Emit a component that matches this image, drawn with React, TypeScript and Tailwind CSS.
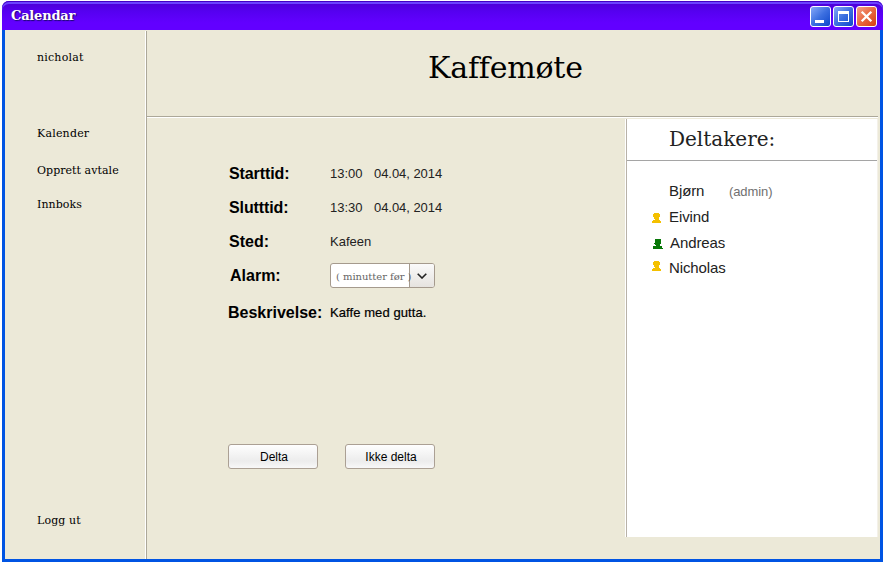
import React from "react";

const serif = "font-['DejaVu_Serif',serif]";
const sans = "font-['Liberation_Sans',Arial,sans-serif]";

function TitleBar() {
  const blue =
    "h-[21px] w-[21px] rounded-[3px] border border-white bg-linear-to-br from-[#86a8f8] via-[#3c6fe0] to-[#0b45cb]";
  return (
    <header className="flex h-[29px] shrink-0 items-start rounded-t-[7px] bg-linear-to-b from-[#4a00d0] from-0% via-[#5500f0] via-35% to-[#6200ff] to-75% shadow-[inset_0_1px_0_#4300c4,inset_0_3px_0_#6b42ff]">
      <h1 className={`${serif} grow pl-[9px] pt-[6px] text-[13px] font-bold leading-[18px] tracking-[-0.2px] text-white [text-shadow:1px_1px_1px_#1c0a70]`}>
        Calendar
      </h1>
      <div className="flex gap-[2px] pr-[6px] pt-[5px]">
        <button className={blue} aria-label="Minimize">
          <svg width="19" height="19" viewBox="0 0 19 19" shapeRendering="crispEdges">
            <path d="M4 13h9v3H4z" fill="#fff" />
          </svg>
        </button>
        <button className={blue} aria-label="Maximize">
          <svg width="19" height="19" viewBox="0 0 19 19" shapeRendering="crispEdges">
            <path d="M4 4h11v11H4zM5 7v7h9V7z" fill="#fff" fillRule="evenodd" />
          </svg>
        </button>
        <button
          className="h-[21px] w-[21px] rounded-[3px] border border-white bg-linear-to-br from-[#f3a086] via-[#e8683f] to-[#d83a08]"
          aria-label="Close"
        >
          <svg width="19" height="19" viewBox="0 0 19 19">
            <path d="M4.7 4.7l9.6 9.6M14.3 4.7l-9.6 9.6" stroke="#fff" strokeWidth="2.3" />
          </svg>
        </button>
      </div>
    </header>
  );
}

function Sidebar() {
  return (
    <nav className={`${serif} flex w-[141px] shrink-0 flex-col pl-[32px] pt-[20px] text-[11px] leading-4 text-black`}>
      <span className="tracking-[0.2px]">nicholat</span>
      <span className="mt-[60px] tracking-[0.2px]">Kalender</span>
      <span className="mt-[21px] tracking-[0.05px]">Opprett avtale</span>
      <span className="mt-[18px] tracking-[0.05px]">Innboks</span>
      <span className="mt-[300px] tracking-[0.1px]">Logg ut</span>
    </nav>
  );
}

function DateRow({ label, time, date }: { label: string; time: string; date: string }) {
  return (
    <div className="flex h-[34px] items-center">
      <b className="w-[101px] text-base tracking-[-0.1px] text-black">{label}</b>
      <span className="w-[44px]">{time}</span>
      <span className="tracking-[-0.05px]">{date}</span>
    </div>
  );
}

function Person({ className }: { className: string }) {
  return (
    <svg className={className} width="9" height="10" viewBox="0 0 9 10" fill="currentColor" shapeRendering="crispEdges">
      <path d="M2 0H7V1H8V4H7V7H8V8H9V10H0V8H1V7H3V6H2V4H1V1H2z" />
    </svg>
  );
}

function PersonTurned({ className }: { className: string }) {
  return (
    <svg className={className} width="10" height="10" viewBox="0 0 10 10" fill="currentColor" shapeRendering="crispEdges">
      <path d="M2 0H8V5H7V7H9V9H10V10H0V7H3V6H2V5H1V4H2z" />
    </svg>
  );
}

function Details() {
  const button =
    "h-[25px] w-[90px] rounded-[3px] border border-[#aba094] bg-linear-to-b from-[#fefefe] via-[#ececec] via-70% to-[#f8f8f8] pl-[2px] text-[12px] text-black";
  return (
    <section className={`${sans} w-[478px] shrink-0 pl-[81px] pt-[39px] text-[13px] text-[#222]`}>
      <div className="pl-px">
        <DateRow label="Starttid:" time="13:00" date="04.04, 2014" />
        <DateRow label="Slutttid:" time="13:30" date="04.04, 2014" />
        <div className="flex h-[34px] items-center">
          <b className="w-[101px] text-base text-black">Sted:</b>
          <span>Kafeen</span>
        </div>
        <div className="flex h-[34px] items-center">
          <b className="w-[101px] pl-px text-base text-black">Alarm:</b>
          <div className="mb-[2px] flex h-[25px] w-[105px] rounded-[3px] border border-[#a59a8d] bg-white">
            <span className={`${serif} z-10 w-[78px] shrink-0 whitespace-nowrap pl-[5px] pt-px text-[10px] leading-6 tracking-[-0.05px] text-[#666]`}>
              ( minutter før )
            </span>
            <span className="flex grow items-center justify-center rounded-r-[2px] border-l border-[#a59a8d] bg-linear-to-b from-[#fafafa] to-[#e6e3df] pt-[2px]">
              <svg width="10" height="6" viewBox="0 0 10 6" fill="none" stroke="#222" strokeWidth="1.6">
                <path d="M.7.7L5 5 9.3.7" />
              </svg>
            </span>
          </div>
        </div>
      </div>
      <div className="flex h-[40px] items-center">
        <b className="w-[102px] text-base text-black">Beskrivelse:</b>
        <span className="tracking-[0.08px] text-black [-webkit-text-stroke:0.2px_#000]">Kaffe med gutta.</span>
      </div>
      <div className="mt-[111px] flex gap-[27px]">
        <button className={button}>Delta</button>
        <button className={button}>Ikke delta</button>
      </div>
    </section>
  );
}

function Participants() {
  return (
    <aside className={`${sans} mt-px h-[418px] w-[253px] border-l border-white`}>
      <div className="h-full border-x border-l-[#b8b2a8] border-r-[#f4f1e9] bg-white text-[15px] text-[#222]">
        <h2 className={`${serif} h-[42px] border-b border-[#a5a5a5] pl-[42px] text-[20px] leading-[41px]`}>Deltakere:</h2>
        <ul className="pt-[17px] tracking-[-0.1px]">
          <li className="flex h-[26px] items-center pl-[42px]">
            <span className="w-[60px]">Bjørn</span>
            <span className="pt-px text-[13px] text-[#707070]">(admin)</span>
          </li>
          <li className="flex h-[26px] items-center pl-[25px]">
            <Person className="mr-[8px] mt-[2px] text-[#f4c000]" />
            Eivind
          </li>
          <li className="flex h-[26px] items-center pl-[26px]">
            <PersonTurned className="mr-[7px] mt-[2px] text-[#087808]" />
            Andreas
          </li>
          <li className="flex h-[25px] items-center pl-[25px]">
            <Person className="mb-[5px] mr-[8px] text-[#f4c000]" />
            Nicholas
          </li>
        </ul>
      </div>
    </aside>
  );
}

export default function App() {
  return (
    <div className="h-[563px] w-[884px] overflow-hidden bg-white pl-[2px] pt-px">
      <div className="flex h-[561px] w-[881px] flex-col">
        <TitleBar />
        <div className="flex min-h-0 grow border-x-3 border-b-3 border-[#0054e3] bg-[#ece9d8]">
          <Sidebar />
          <main className="mt-px w-[732px] border-l border-[#aca899] shadow-[-1px_0_0_#fff]">
            <div className="h-[86px] border-b border-[#aca899] shadow-[0_1px_0_#fff]">
              <h1 className={`${serif} pl-[281px] pt-[17px] text-[30px] leading-[40px] tracking-[-0.2px] text-black`}>Kaffemøte</h1>
            </div>
            <div className="flex pt-px">
              <Details />
              <Participants />
            </div>
          </main>
        </div>
      </div>
    </div>
  );
}
